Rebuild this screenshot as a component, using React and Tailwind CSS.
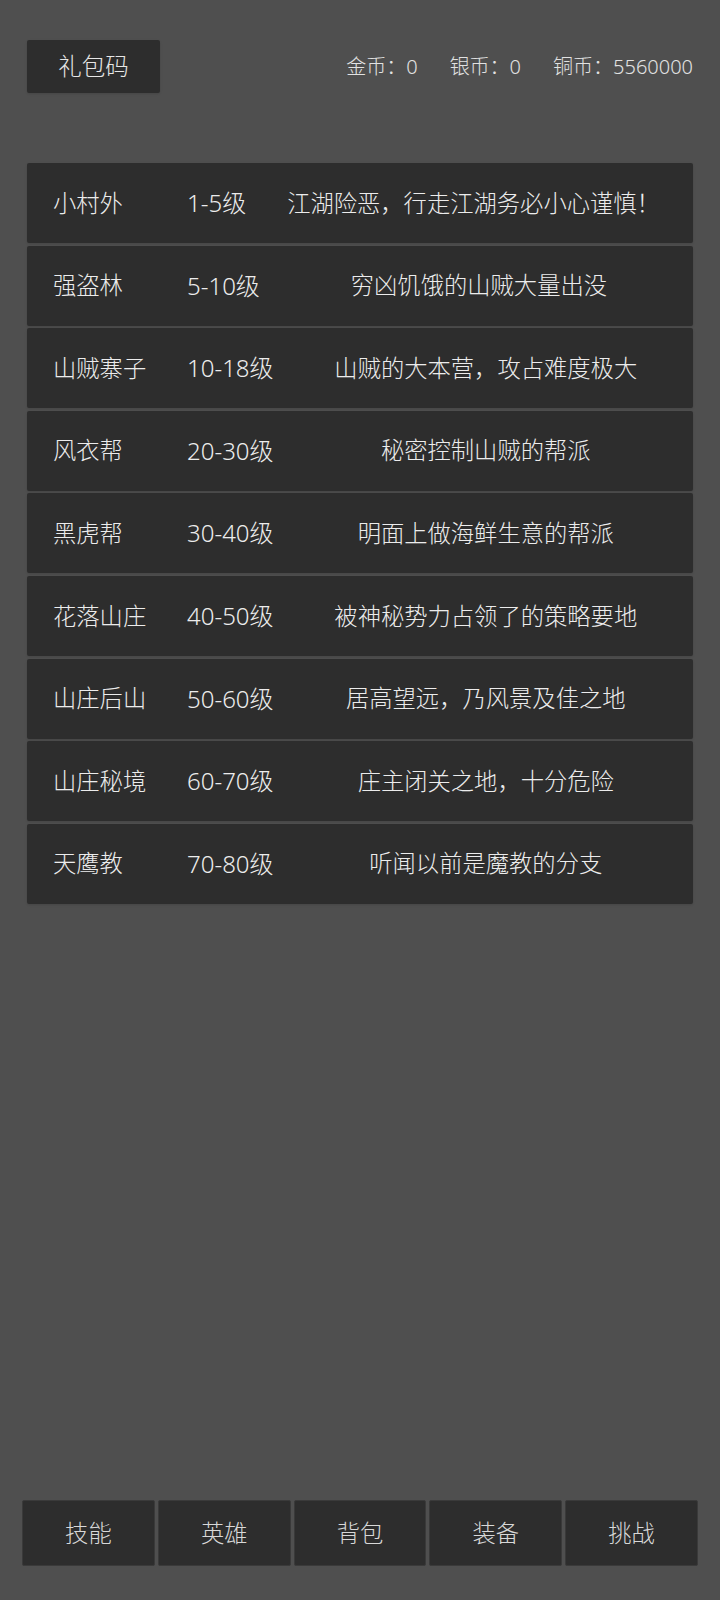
import React from 'react';

const zones = [
  { name: '小村外', level: '1-5级', desc: '江湖险恶，行走江湖务必小心谨慎！' },
  { name: '强盗林', level: '5-10级', desc: '穷凶饥饿的山贼大量出没' },
  { name: '山贼寨子', level: '10-18级', desc: '山贼的大本营，攻占难度极大' },
  { name: '风衣帮', level: '20-30级', desc: '秘密控制山贼的帮派' },
  { name: '黑虎帮', level: '30-40级', desc: '明面上做海鲜生意的帮派' },
  { name: '花落山庄', level: '40-50级', desc: '被神秘势力占领了的策略要地' },
  { name: '山庄后山', level: '50-60级', desc: '居高望远，乃风景及佳之地' },
  { name: '山庄秘境', level: '60-70级', desc: '庄主闭关之地，十分危险' },
  { name: '天鹰教', level: '70-80级', desc: '听闻以前是魔教的分支' },
];

const tabs = ['技能', '英雄', '背包', '装备', '挑战'];

export default function App() {
  return (
    <div className="min-h-[1600px] bg-[#4f4f4f] flex flex-col font-['Noto_Sans','Noto_Sans_CJK_SC',sans-serif] font-light text-[#ececec]">
      {/* header */}
      <div className="flex items-center justify-between pt-[40px] pl-[27px] pr-[27px]">
        <button className="w-[133px] h-[53px] bg-[#2d2d2d] rounded-[2px] shadow-sm text-[23.5px] text-[#e6e6e6] flex items-center justify-center">
          礼包码
        </button>
        <div className="flex items-center gap-[32px] text-[20px] text-[#e2e2e2]">
          <span>金币：0</span>
          <span>银币：0</span>
          <span>铜币：5560000</span>
        </div>
      </div>

      {/* zone list */}
      <div className="mt-[70px] mx-[27px] flex flex-col gap-[2.6px]">
        {zones.map(z => (
          <div key={z.name} className="h-[80px] bg-[#2d2d2d] rounded-[2px] shadow-sm flex items-center pl-[26px] text-[23.3px] whitespace-nowrap">
            <div className="w-[134px] shrink-0">{z.name}</div>
            <div className="shrink-0 text-[24px]">{z.level}</div>
            <div className="flex-1 text-center ml-[41px] mr-[36px]">{z.desc}</div>
          </div>
        ))}
      </div>

      {/* bottom nav */}
      <div className="mt-auto pb-[34px] px-[22px] grid grid-cols-5 gap-[3px]">
        {tabs.map(t => (
          <button key={t} className="h-[66px] bg-[#2d2d2d] rounded-[2px] border border-[#3a3a3a] text-[23.3px] text-[#d8d8d8] flex items-center justify-center">
            {t}
          </button>
        ))}
      </div>
    </div>
  );
}
